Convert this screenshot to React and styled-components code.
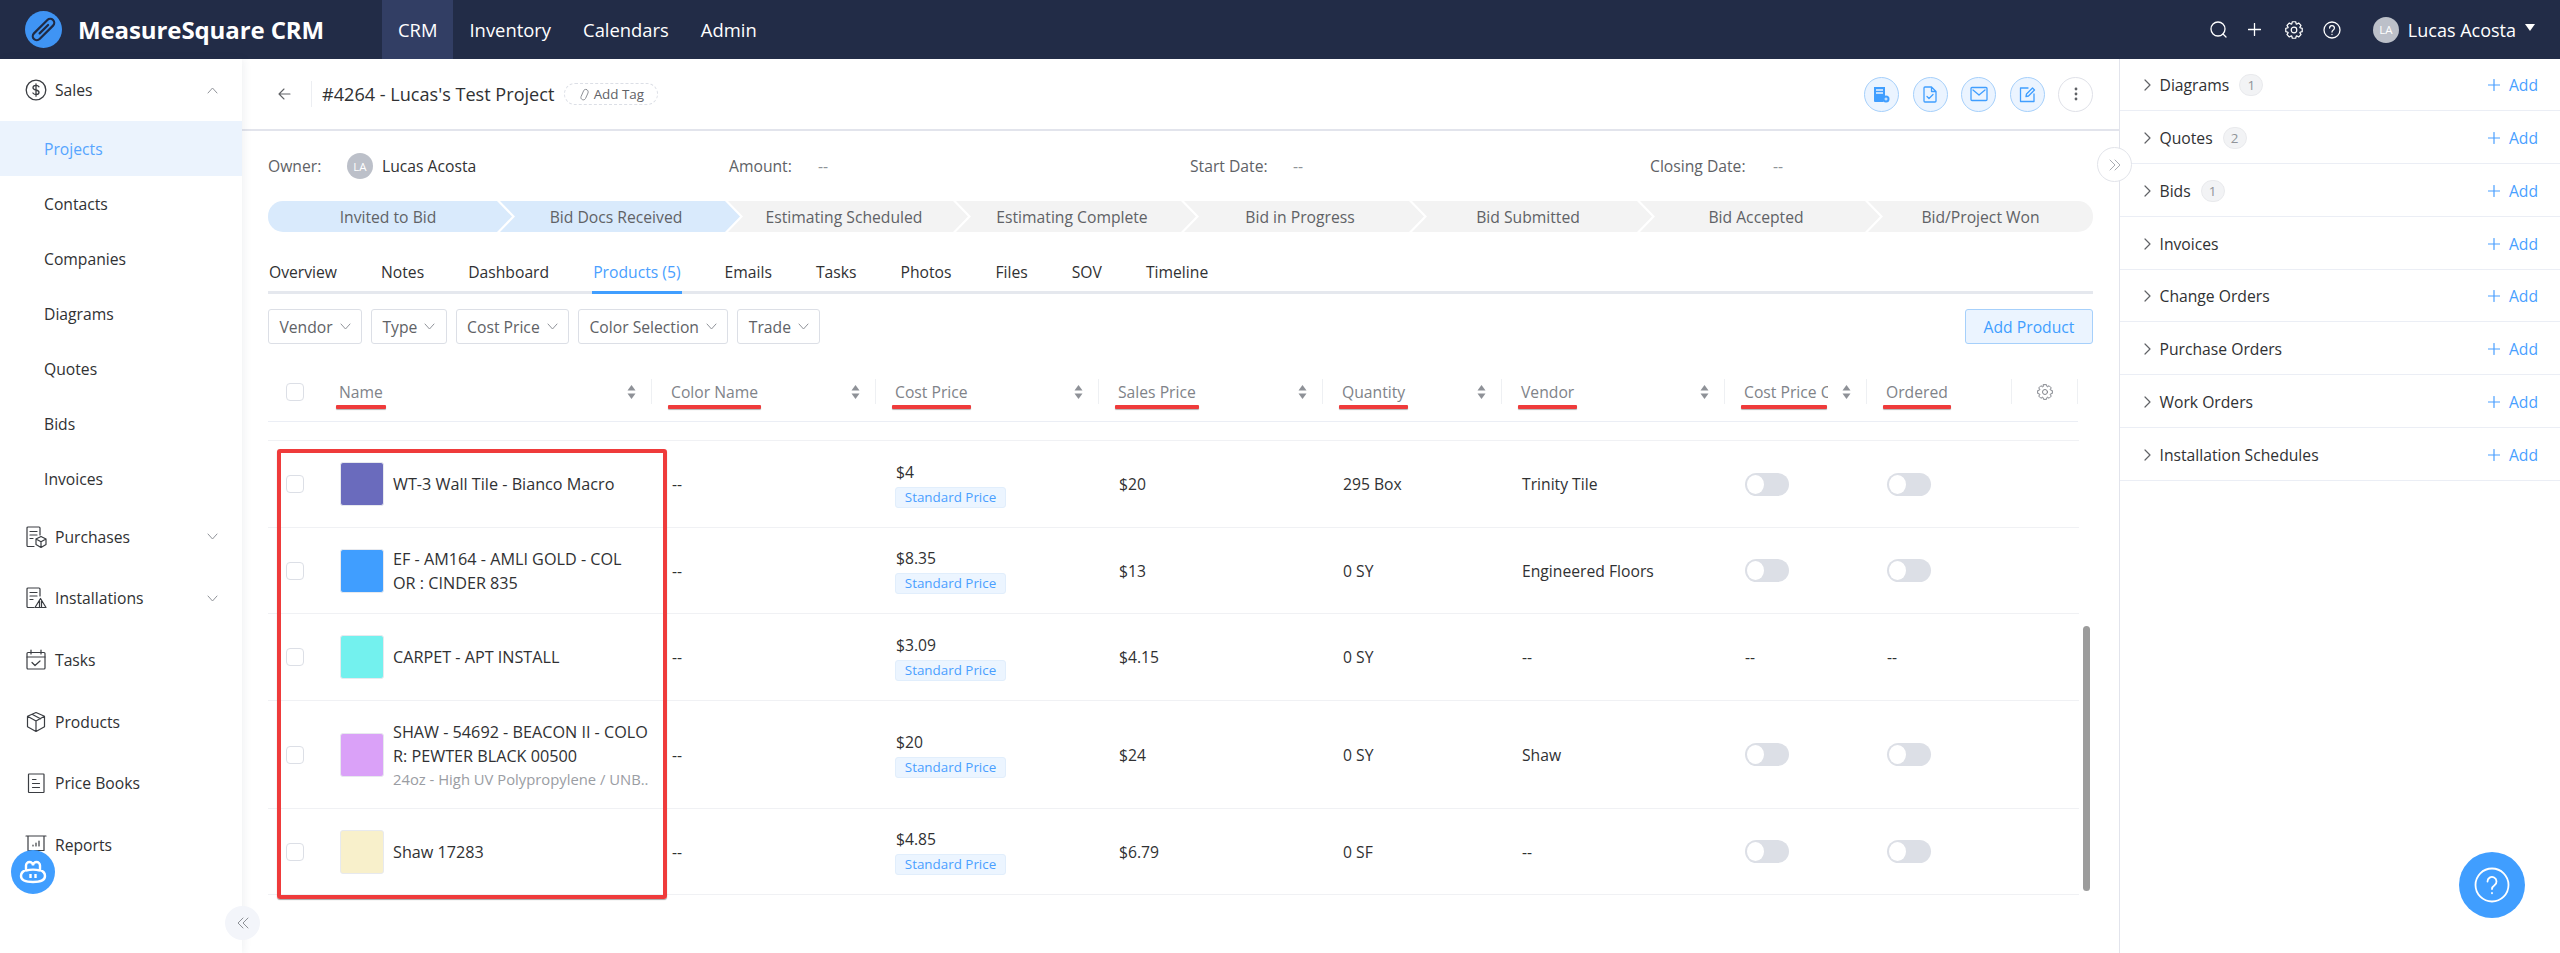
import React from 'react';
import styled, { createGlobalStyle } from 'styled-components';

const Global = createGlobalStyle`
  html, body { margin: 0; padding: 0; background: #fff; height: 953px; overflow: hidden; }
  * { box-sizing: border-box; }
  body { font-family: "Open Sans", "Noto Sans", sans-serif; font-size: 15.7px; color: #303133; }
`;

const Page = styled.div`width: 2560px; height: 953px; display: flex; flex-direction: column; overflow: hidden;`;
const TopBar = styled.header`height: 59px; flex: none; background: #222c47; display: flex; align-items: stretch; color: #fff;`;
const Brand = styled.div`width: 382px; flex: none; display: flex; align-items: center; gap: 16px; padding-left: 25px;`;
const BrandName = styled.span`font-size: 24px; font-weight: 700; letter-spacing: -0.1px;`;
const NavItem = styled.div`
  padding: 0 16px; display: flex; align-items: center; font-size: 18.4px;
  background: ${p => (p.$active ? '#323e64' : 'transparent')};
`;
const TopRight = styled.div`margin-left: auto; display: flex; align-items: center; padding-right: 25px;`;
const TopIcon = styled.span`display: flex; margin-right: ${p => p.$gap}px;`;
const UserName = styled.span`font-size: 18px; margin: 0 9px;`;
const Caret = styled.span`width: 0; height: 0; border-left: 5.5px solid transparent; border-right: 5.5px solid transparent; border-top: 7px solid #fff; margin-top: -4px;`;
const Avatar = styled.span`
  width: 26px; height: 26px; border-radius: 50%; background: #bcc0c9; color: #fff; flex: none;
  display: flex; align-items: center; justify-content: center; font-size: 11.5px;
`;

const Body = styled.div`flex: 1; display: flex; min-height: 0; position: relative;`;
const Sidebar = styled.aside`
  width: 242px; flex: none; background: #fff; box-shadow: 2px 0 8px rgba(40, 50, 90, 0.07);
  position: relative; z-index: 2;
`;
const SideGroup = styled.div`
  height: ${p => p.$h}px; display: flex; align-items: center; padding: 0 24px 0 25px; gap: 8px; color: #303133;
`;
const SideIcon = styled.span`width: 22px; height: 24px; display: flex; align-items: center; justify-content: center; flex: none;`;
const SideChevron = styled.span`margin-left: auto; display: flex;`;
const SideSub = styled.div`
  height: 55px; display: flex; align-items: center; padding-left: 44px;
  background: ${p => (p.$active ? '#ebf3fd' : 'transparent')};
  color: ${p => (p.$active ? '#56a5ff' : '#303133')};
`;
const BotBtn = styled.div`
  position: absolute; left: 11px; top: 791px; width: 44px; height: 44px; border-radius: 50%; background: #409eff;
  display: flex; align-items: center; justify-content: center; z-index: 3;
`;
const CollapseBtn = styled.div`
  position: absolute; left: 225px; top: 847px; width: 35px; height: 34px; border-radius: 50%; background: #f3f5fa;
  display: flex; align-items: center; justify-content: center; z-index: 3;
`;

const Main = styled.main`flex: 1; min-width: 0; position: relative;`;
const TitleRow = styled.div`
  height: 72px; border-bottom: 2px solid #e2e4ec; display: flex; align-items: center; padding: 0 26px 0 36px;
`;
const BackDivider = styled.span`width: 1px; height: 26px; background: #eceef2; margin: 0 10px 0 20px;`;
const Title = styled.h1`margin: 0; font-size: 18.1px; font-weight: 400; color: #303133;`;
const AddTag = styled.span`
  margin-left: 10px; height: 22px; width: 94px; border: 1px dashed #dcdfe6; border-radius: 11px; color: #606266; font-size: 13.4px;
  display: flex; align-items: center; justify-content: center; gap: 4px;
`;
const Actions = styled.div`margin-left: auto; display: flex; gap: 13.5px;`;
const ActionBtn = styled.span`
  width: 35px; height: 35px; border-radius: 50%; display: flex; align-items: center; justify-content: center;
  background: ${p => (p.$plain ? '#fff' : '#ebf4ff')};
  border: 1px solid ${p => (p.$plain ? '#dfe1e8' : '#a6d0fb')};
`;

const Content = styled.div`padding: 0 26px 0 26px;`;
const InfoRow = styled.div`height: 70px; display: grid; grid-template-columns: 461px 461px 460px 1fr; align-items: center; color: #606266;`;
const InfoCell = styled.div`display: flex; align-items: center;`;
const InfoLabel = styled.span`width: ${p => p.$w}px;`;
const InfoName = styled.span`color: #303133; margin-left: 9px;`;
const Dash = styled.span`color: #909399;`;

const StageBar = styled.div`display: flex; height: 31px; border-radius: 15px; overflow: hidden;`;
const Stage = styled.div`
  flex: ${p => (p.$last ? '1 1 0' : `0 0 ${p.$first ? 244 : 240}px`)};
  margin-left: ${p => (p.$first ? 0 : -12)}px;
  padding-right: ${p => (p.$first ? 4 : p.$last ? 0 : 8)}px;
  display: flex; align-items: center; justify-content: center;
  background: ${p => (p.$done ? '#d9eafc' : '#f3f3f3')}; color: #606266;
  clip-path: ${p => (p.$first
    ? 'polygon(0 0, calc(100% - 15px) 0, 100% 50%, calc(100% - 15px) 100%, 0 100%)'
    : p.$last
      ? 'polygon(0 0, 100% 0, 100% 100%, 0 100%, 15px 50%)'
      : 'polygon(0 0, calc(100% - 15px) 0, 100% 50%, calc(100% - 15px) 100%, 0 100%, 15px 50%)')};
`;

const Tabs = styled.div`margin-top: 25px; height: 37px; border-bottom: 3px solid #e5e8ee; display: flex; gap: 42px;`;
const Tab = styled.div`
  height: 37px; padding: 4px 1px 0; border-bottom: 3px solid ${p => (p.$active ? '#409eff' : 'transparent')};
  color: ${p => (p.$active ? '#4a9fff' : '#303133')};
`;

const FilterRow = styled.div`margin-top: 15px; height: 35px; display: flex; gap: 9px;`;
const Filter = styled.div`
  height: 35px; padding: 0 10.4px; border: 1px solid #dcdfe6; border-radius: 3px; color: #606266;
  display: flex; align-items: center; gap: 7px;
`;
const AddProduct = styled.div`
  margin-left: auto; width: 128px; height: 35px; border: 1px solid #a6d0fb; border-radius: 3px; background: #ebf4ff; color: #409eff;
  display: flex; align-items: center; justify-content: center;
`;

const cols = '52px 332px 224px 223px 224px 179px 223px 142px 145px 66px';
const HeadRow = styled.div`
  margin-top: 18px; height: 60px; width: 1810px; display: grid; grid-template-columns: ${cols}; align-items: center;
  border-bottom: 1px solid #ebeef5;
`;
const HeadCell = styled.div`
  height: 25px; display: flex; align-items: center; padding: 0 15px 0 19px; color: #808389;
  border-right: 1px solid #eef0f3;
`;
const HeadBox = styled.div`padding-left: 18px; display: flex;`;
const HeadLabel = styled.span`position: relative; line-height: 22px;`;
const HeadClip = styled.span`display: block; width: ${p => p.$w}; overflow: hidden; white-space: nowrap;`;
const RedLine = styled.i`
  position: absolute; left: -3px; right: ${p => p.$r ?? -3}px; bottom: -6px; height: 4px; background: #ef3b3b; border-radius: 1px;
  box-shadow: 0 1px 1px rgba(0, 0, 0, 0.3);
`;
const SortMark = styled.span`margin-left: auto; display: flex;`;
const GearCell = styled(HeadCell)`padding: 0; justify-content: center;`;

const TableBody = styled.div`position: relative; width: 1825px;`;
const Spacer = styled.div`height: 19px; width: 1811px; border-bottom: 1px solid #f0f1f4;`;
const Row = styled.div`
  width: 1811px; height: ${p => p.$h}px; display: grid; grid-template-columns: ${cols}; align-items: center;
  border-bottom: 1px solid #f0f1f4;
`;
const Cell = styled.div`padding-left: 20px; color: #303133;`;
const CheckCell = styled.div`padding-left: 18px; display: flex;`;
const Check = styled.span`width: 18px; height: 18px; border: 1px solid #dcdfe6; border-radius: 4px; background: #fff; display: block;`;
const NameCell = styled.div`padding-left: 20px; display: flex; align-items: center; gap: 9px;`;
const Swatch = styled.span`width: 44px; height: 44px; flex: none; border-radius: 3px; border: 1px solid #e7e9ee; background: ${p => p.$c};`;
const NameBlock = styled.div`white-space: nowrap;`;
const NameText = styled.div`line-height: 24px; font-size: 16.2px; color: #303133;`;
const SubText = styled.div`color: #9a9da3; line-height: 22px; font-size: 14.8px;`;
const PriceTag = styled.span`
  display: block; width: 111px; height: 21px; margin-top: 4px; margin-left: -1px; border: 1px solid #e1eefc; border-radius: 3px;
  background: #ecf5ff; color: #4a9fff; font-size: 13.4px; line-height: 19px; text-align: center;
`;
const Price = styled.div`line-height: 22px;`;
const Toggle = styled.span`
  display: block; width: 44px; height: 23px; border-radius: 11.5px; background: #dcdfe6; position: relative;
  &::after { content: ''; position: absolute; left: 2px; top: 2px; width: 17px; height: 19px; border-radius: 50%; background: #fff; }
`;
const RedBox = styled.div`
  position: absolute; left: 9px; top: 27px; width: 390px; height: 450px; border: 4px solid #ef3b3b; border-radius: 3px;
  box-shadow: 0 1px 1px rgba(0, 0, 0, 0.35); pointer-events: none;
`;
const Scroll = styled.div`position: absolute; left: 1815px; top: 204px; width: 7px; height: 265px; border-radius: 4px; background: #9c9c9c;`;
const ExpandBtn = styled.div`
  position: absolute; left: 1855px; top: 88px; width: 35px; height: 35px; border-radius: 50%; background: #fff; border: 1px solid #e2e4ea;
  display: flex; align-items: center; justify-content: center; z-index: 3;
`;

const RightPanel = styled.aside`width: 441px; flex: none; border-left: 1.5px solid #e2e4ec;`;
const PanelRow = styled.div`
  height: ${p => p.$h}px; display: flex; align-items: center; padding: 1px 22px 0 23.5px; border-bottom: 1.5px solid #ebeef5; gap: 9px;
  color: #303133;
`;
const Badge = styled.span`
  min-width: 24px; height: 22px; border-radius: 11px; background: #f2f3f5; border: 1px solid #e9eaed; color: #909399; font-size: 13.4px;
  display: flex; align-items: center; justify-content: center; margin-left: 1px;
`;
const AddLink = styled.span`margin-left: auto; display: flex; align-items: center; gap: 9px; color: #4a9fff;`;
const HelpFab = styled.div`
  position: absolute; left: 2459px; top: 793px; width: 66px; height: 66px; border-radius: 50%; background: #409eff;
  display: flex; align-items: center; justify-content: center; z-index: 4;
`;

/* ---------- drawings ---------- */
const Svg = ({ s = 16, w, h, vb, c = 'currentColor', sw = 1.3, children }) => (
  <svg width={w || s} height={h || s} viewBox={vb || `0 0 ${w || s} ${h || s}`} fill="none" stroke={c} strokeWidth={sw} strokeLinecap="round" strokeLinejoin="round">{children}</svg>
);
const Down = ({ c = '#909399' }) => <Svg w={11} h={7} c={c} sw={1}><path d="M1 1l4.5 5L10 1" /></Svg>;
const Up = () => <Svg w={11} h={7} c="#909399" sw={1}><path d="M1 6l4.5-5L10 6" /></Svg>;
const Right = () => <Svg w={7} h={12} c="#606266" sw={1.2}><path d="M1 1l5 5-5 5" /></Svg>;
const Sort = () => (
  <svg width="9" height="16" viewBox="0 0 9 16"><path d="M4.5 1L8.5 6.5H.5z" fill="#8e9197" /><path d="M4.5 15L.5 9.5h8z" fill="#8e9197" /></svg>
);
const gearPath = (() => {
  const pts = [];
  for (let i = 0; i < 8; i++) {
    const a = (i * Math.PI) / 4 - Math.PI / 2;
    const at = (r, d) => `${(9 + r * Math.cos(a + d)).toFixed(2)} ${(9 + r * Math.sin(a + d)).toFixed(2)}`;
    pts.push(at(8.4, -0.2), at(8.4, 0.2), at(6.4, 0.36), at(6.4, 0.42));
  }
  return `M${pts.join('L')}Z`;
})();
const Gear = ({ s = 18, c = '#fff', sw = 1.2 }) => (
  <Svg s={s} vb="0 0 18 18" c={c} sw={sw}>
    <path d={gearPath} />
    <circle cx="9" cy="9" r="2.800" />
  </Svg>
);
const HelpIcon = ({ s = 18, c = '#fff', sw = 1.3 }) => (
  <Svg s={s} vb="0 0 18 18" c={c} sw={sw}>
    <circle cx="9" cy="9" r="8" />
    <path d="M6.600 7a2.400 2.400 0 1 1 3.700 2c-.9.600-1.300 1-1.300 2" />
    <path d="M9 13.400v.1" />
  </Svg>
);
const Logo = () => (
  <svg width="37" height="37" viewBox="0 0 37 37">
    <circle cx="18.500" cy="18.500" r="18.500" fill="#3f94f4" />
    <g fill="none" stroke="#1f2a44" strokeWidth="2.200" strokeLinecap="round" transform="rotate(45 18.500 18.500)">
      <rect x="14.500" y="5" width="8" height="27" rx="4" />
      <path d="M18.500 11v15" stroke="#3f94f4" />
      <path d="M18.500 12v12" />
    </g>
  </svg>
);
const IDollar = () => (
  <Svg s={22} c="#3a3d42" sw={1.3}><circle cx="11" cy="11" r="9.800" /><path d="M14 7.800c-.6-1-1.700-1.400-3-1.400-1.700 0-3 .9-3 2.300 0 3 6 1.600 6 4.500 0 1.400-1.300 2.300-3 2.300-1.400 0-2.500-.5-3.100-1.500M11 4.800v12.400" /></Svg>
);
const IDocBox = () => (
  <Svg s={22} c="#3a3d42" sw={1.2}><path d="M9 20.500H3a1 1 0 0 1-1-1V2a1 1 0 0 1 1-1h11a1 1 0 0 1 1 1v7" /><path d="M5 5.500h7M5 9h7M5 12.500h3" /><path d="M16 10.500l5 2.500v5.500l-5 3-5-3V13zM11 13l5 2.800 5-2.800M16 15.800v5.700" /></Svg>
);
const IDocCone = () => (
  <Svg s={22} c="#3a3d42" sw={1.2}><path d="M9 20.500H3a1 1 0 0 1-1-1V2a1 1 0 0 1 1-1h11a1 1 0 0 1 1 1v7" /><path d="M5 5.500h7M5 9h7M5 12.500h3" /><path d="M10 20.500l5.500-9 5.500 9zM14.500 14v6.500M16.500 14v6.500" /></Svg>
);
const ICal = () => (
  <Svg s={22} c="#3a3d42" sw={1.2}><rect x="2" y="3.500" width="18" height="16.500" rx="1" /><path d="M2 8h18M6 1v4M16 1v4M7 13.500l3 3 5-4.500" /></Svg>
);
const IBox = () => (
  <Svg s={22} c="#3a3d42" sw={1.2}><path d="M11 1.500l8.500 3.800v10.400L11 20.500l-8.500-4.800V5.300zM2.500 5.300L11 10l8.500-4.700M11 10v10.500M7 3.300l8.500 4.500" /></Svg>
);
const IBook = () => (
  <Svg s={22} c="#3a3d42" sw={1.2}><rect x="3.500" y="2" width="15.500" height="18.500" rx=".5" /><path d="M7.500 7.500h3.500M7.500 11.500h7M7.500 15.500h7" /></Svg>
);
const IReport = () => (
  <Svg s={22} c="#3a3d42" sw={1.2}><path d="M1 2h20M3 2v14.500h16V2M8 12v-1M11 12V9M14 12V7" /></Svg>
);

const stages = ['Invited to Bid', 'Bid Docs Received', 'Estimating Scheduled', 'Estimating Complete', 'Bid in Progress', 'Bid Submitted', 'Bid Accepted', 'Bid/Project Won'];
const tabs = ['Overview', 'Notes', 'Dashboard', 'Products (5)', 'Emails', 'Tasks', 'Photos', 'Files', 'SOV', 'Timeline'];
const filters = ['Vendor', 'Type', 'Cost Price', 'Color Selection', 'Trade'];
const heads = ['Color Name', 'Cost Price', 'Sales Price', 'Quantity', 'Vendor'];
const subs = ['Contacts', 'Companies', 'Diagrams', 'Quotes', 'Bids', 'Invoices'];
const rows = [
  { h: 87, c: '#6a6bbd', name: ['WT-3 Wall Tile - Bianco Macro'], cost: '$4', sale: '$20', qty: '295 Box', vendor: 'Trinity Tile', on: true },
  { h: 86, c: '#409eff', name: ['EF - AM164 - AMLI GOLD - COL', 'OR : CINDER 835'], cost: '$8.35', sale: '$13', qty: '0 SY', vendor: 'Engineered Floors', on: true },
  { h: 87, c: '#73f1ee', name: ['CARPET - APT INSTALL'], cost: '$3.09', sale: '$4.15', qty: '0 SY', vendor: '--', on: false },
  { h: 108, c: '#daa1f8', name: ['SHAW - 54692 - BEACON II - COLO', 'R: PEWTER BLACK 00500'], sub: '24oz - High UV Polypropylene / UNB..', cost: '$20', sale: '$24', qty: '0 SY', vendor: 'Shaw', on: true },
  { h: 86, c: '#f8f0cb', name: ['Shaw 17283'], cost: '$4.85', sale: '$6.79', qty: '0 SF', vendor: '--', on: true },
];
const panel = [
  ['Diagrams', 52, 1], ['Quotes', 53, 2], ['Bids', 53, 1], ['Invoices', 53], ['Change Orders', 52], ['Purchase Orders', 53], ['Work Orders', 53], ['Installation Schedules', 53],
];
const groups = [
  ['Purchases', <IDocBox />, true], ['Installations', <IDocCone />, true], ['Tasks', <ICal />], ['Products', <IBox />], ['Price Books', <IBook />], ['Reports', <IReport />],
];

export default function App() {
  return (
    <Page>
      <Global />
      <TopBar>
        <Brand><Logo /><BrandName>MeasureSquare CRM</BrandName></Brand>
        <NavItem $active>CRM</NavItem>
        <NavItem>Inventory</NavItem>
        <NavItem>Calendars</NavItem>
        <NavItem>Admin</NavItem>
        <TopRight>
          <TopIcon $gap={21}><Svg s={17} c="#fff" sw={1.3}><circle cx="8" cy="8" r="7" /><path d="M13 13l3 3" /></Svg></TopIcon>
          <TopIcon $gap={24}><Svg s={13} c="#fff" sw={1.3}><path d="M6.500 .5v12M.5 6.500h12" /></Svg></TopIcon>
          <TopIcon $gap={20}><Gear /></TopIcon>
          <TopIcon $gap={32}><HelpIcon /></TopIcon>
          <Avatar>LA</Avatar>
          <UserName>Lucas Acosta</UserName>
          <Caret />
        </TopRight>
      </TopBar>
      <Body>
        <Sidebar>
          <SideGroup $h={62}><SideIcon><IDollar /></SideIcon>Sales<SideChevron><Up /></SideChevron></SideGroup>
          <SideSub $active>Projects</SideSub>
          {subs.map(s => <SideSub key={s}>{s}</SideSub>)}
          {groups.map(([t, ic, more]) => (
            <SideGroup key={t} $h={61.6}><SideIcon>{ic}</SideIcon>{t}{more && <SideChevron><Down /></SideChevron>}</SideGroup>
          ))}
          <BotBtn>
            <svg width="28" height="26" viewBox="0 0 28 26" fill="none" stroke="#fff" strokeWidth="2.400">
              <path d="M7 11V6.500a3.500 3.500 0 0 1 7 0 3.500 3.500 0 0 1 7 0V11c3 1 5 3.500 5 6 0 4-4 6-12 6S2 21 2 17c0-2.500 2-5 5-6z" />
              <path d="M7 11.500c4-1 10-1 14 0M11.500 15v4M16.500 15v4" />
            </svg>
          </BotBtn>
          <CollapseBtn><Svg w={12} h={12} c="#8d9096" sw={1}><path d="M6 1L1 6l5 5M11 1L6 6l5 5" /></Svg></CollapseBtn>
        </Sidebar>
        <Main>
          <TitleRow>
            <Svg w={13} h={12} c="#606266" sw={1.1}><path d="M12 6H1M6 1L1 6l5 5" /></Svg>
            <BackDivider />
            <Title>#4264 - Lucas's Test Project</Title>
            <AddTag>
              <Svg w={11} h={13} c="#8d9096" sw={1}><path d="M7.500 1.500c1.500.6 2 2 1.500 3.500L6.500 10.500c-.7 1.300-2 1.700-3.200 1.100C2 11 1.600 9.800 2.100 8.500L4.500 3C5 1.700 6.200 1 7.500 1.500z" /></Svg>
              Add Tag
            </AddTag>
            <Actions>
              <ActionBtn>
                <svg width="17" height="17" viewBox="0 0 17 17"><path d="M1 1h11v9.500a4 4 0 0 0-1.500 5.500H2a1 1 0 0 1-1-1z" fill="#409eff" /><path d="M3 4h7M3 7h7" stroke="#ebf4ff" strokeWidth="1.300" /><circle cx="13" cy="13" r="3.500" fill="#409eff" /><path d="M13 11.500v3M11.500 13h3" stroke="#ebf4ff" /></svg>
              </ActionBtn>
              <ActionBtn><Svg w={14} h={17} c="#409eff" sw={1.300}><path d="M2 1h6.500L13 5.500V15a1 1 0 0 1-1 1H2a1 1 0 0 1-1-1V2a1 1 0 0 1 1-1zM8.500 1v4.500H13M4 10.500l2 2 4-4" /></Svg></ActionBtn>
              <ActionBtn><Svg w={18} h={16} c="#409eff" sw={1.300}><rect x="1" y="1.500" width="16" height="13" rx="1" /><path d="M3 4l6 5 6-5" /></Svg></ActionBtn>
              <ActionBtn><Svg s={17} c="#409eff" sw={1.300}><path d="M9 2H1.500v13.500H15V8" /><path d="M7 10.500l.5-2.500 6-6 2 2-6 6z" /></Svg></ActionBtn>
              <ActionBtn $plain><svg width="4" height="14" viewBox="0 0 4 14" fill="#606266"><circle cx="2" cy="2" r="1.400" /><circle cx="2" cy="7" r="1.400" /><circle cx="2" cy="12" r="1.400" /></svg></ActionBtn>
            </Actions>
          </TitleRow>
          <ExpandBtn><Svg w={12} h={12} c="#a9acb2" sw={1}><path d="M1 1l5 5-5 5M6 1l5 5-5 5" /></Svg></ExpandBtn>
          <Content>
            <InfoRow>
              <InfoCell><InfoLabel $w={79}>Owner:</InfoLabel><Avatar>LA</Avatar><InfoName>Lucas Acosta</InfoName></InfoCell>
              <InfoCell><InfoLabel $w={89}>Amount:</InfoLabel><Dash>--</Dash></InfoCell>
              <InfoCell><InfoLabel $w={103}>Start Date:</InfoLabel><Dash>--</Dash></InfoCell>
              <InfoCell><InfoLabel $w={123}>Closing Date:</InfoLabel><Dash>--</Dash></InfoCell>
            </InfoRow>
            <StageBar>
              {stages.map((s, i) => <Stage key={s} $done={i < 2} $first={i === 0} $last={i === 7}>{s}</Stage>)}
            </StageBar>
            <Tabs>{tabs.map(t => <Tab key={t} $active={t === 'Products (5)'}>{t}</Tab>)}</Tabs>
            <FilterRow>
              {filters.map(f => <Filter key={f}>{f}<Down /></Filter>)}
              <AddProduct>Add Product</AddProduct>
            </FilterRow>
            <HeadRow>
              <HeadBox><Check /></HeadBox>
              <HeadCell><HeadLabel>Name<RedLine /></HeadLabel><SortMark><Sort /></SortMark></HeadCell>
              {heads.map(h => <HeadCell key={h}><HeadLabel>{h}<RedLine /></HeadLabel><SortMark><Sort /></SortMark></HeadCell>)}
              <HeadCell><HeadLabel><HeadClip $w="84px">Cost Price C</HeadClip><RedLine $r={1} /></HeadLabel><SortMark><Sort /></SortMark></HeadCell>
              <HeadCell><HeadLabel>Ordered<RedLine /></HeadLabel></HeadCell>
              <GearCell><Gear s={16} c="#7d8087" sw={1.1} /></GearCell>
            </HeadRow>
            <TableBody>
              <Spacer />
              {rows.map(r => (
                <Row key={r.name[0]} $h={r.h}>
                  <CheckCell><Check /></CheckCell>
                  <NameCell>
                    <Swatch $c={r.c} />
                    <NameBlock>
                      {r.name.map(n => <NameText key={n}>{n}</NameText>)}
                      {r.sub && <SubText>{r.sub}</SubText>}
                    </NameBlock>
                  </NameCell>
                  <Cell>--</Cell>
                  <Cell><Price>{r.cost}</Price><PriceTag>Standard Price</PriceTag></Cell>
                  <Cell>{r.sale}</Cell>
                  <Cell>{r.qty}</Cell>
                  <Cell>{r.vendor}</Cell>
                  <Cell>{r.on ? <Toggle /> : '--'}</Cell>
                  <Cell>{r.on ? <Toggle /> : '--'}</Cell>
                  <Cell />
                </Row>
              ))}
              <RedBox />
              <Scroll />
            </TableBody>
          </Content>
        </Main>
        <RightPanel>
          {panel.map(([t, h, n]) => (
            <PanelRow key={t} $h={h}>
              <Right />
              <span>{t}</span>
              {n && <Badge>{n}</Badge>}
              <AddLink><Svg s={12} c="#4a9fff" sw={1.200}><path d="M6 .5v11M.5 6h11" /></Svg>Add</AddLink>
            </PanelRow>
          ))}
        </RightPanel>
        <HelpFab>
          <Svg s={36} vb="0 0 36 36" c="#fff" sw={1.800}>
            <circle cx="18" cy="18" r="16.500" />
            <path d="M13.500 14.500a4.500 4.500 0 1 1 7 3.700c-1.500 1-2.500 2-2.500 3.800" />
            <path d="M18 26v.3" />
          </Svg>
        </HelpFab>
      </Body>
    </Page>
  );
}
